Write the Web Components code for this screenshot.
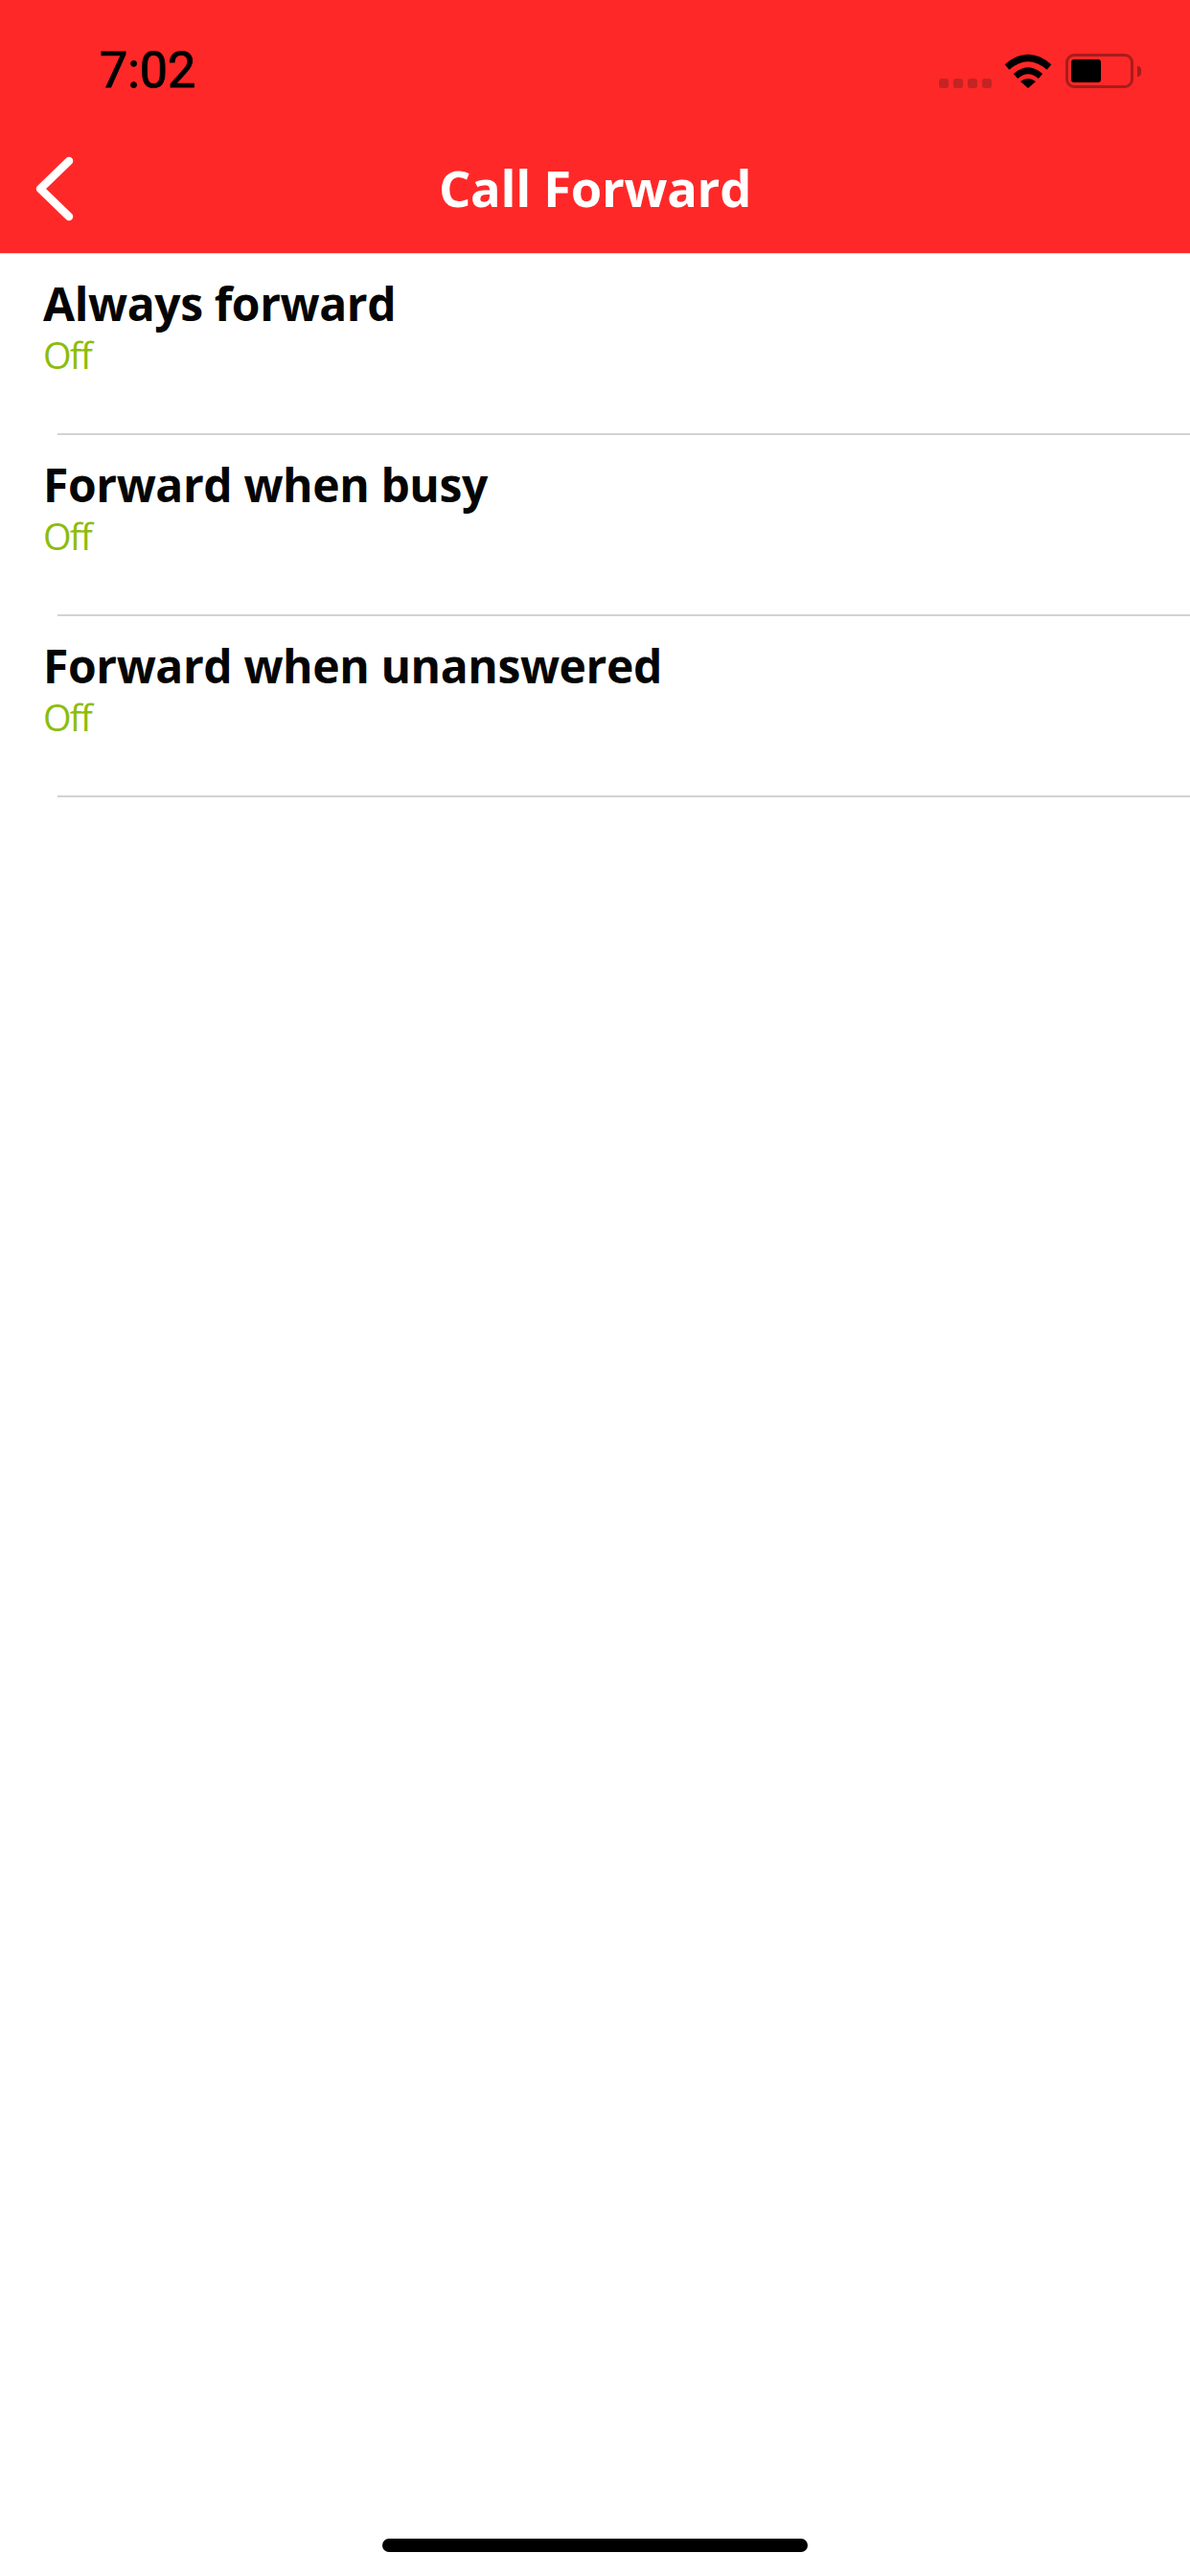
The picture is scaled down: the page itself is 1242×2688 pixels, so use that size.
<!DOCTYPE html>
<html>
<head>
<meta charset="utf-8">
<title>Call Forward</title>
<style>
    html, body { margin: 0; background: #fff; }
</style>
</head>
<body>
<call-forward-screen>
    <forward-row label="Always forward" status="Off"></forward-row>
    <forward-row label="Forward when busy" status="Off"></forward-row>
    <forward-row label="Forward when unanswered" status="Off"></forward-row>
</call-forward-screen>

<script>
class StatusBar extends HTMLElement {
    constructor() {
        super()
        this.attachShadow({ mode: 'open' })
        this.shadowRoot.innerHTML = `
            <style>
                :host {
                    display: flex;
                    align-items: flex-start;
                    justify-content: space-between;
                    height: 132px;
                    padding: 48px 51px 0 104px;
                    box-sizing: border-box;
                }
                .time {
                    font: 400 52px/52px Roboto, sans-serif;
                    -webkit-text-stroke: 1px #000;
                    color: #000;
                }
                .icons {
                    display: flex;
                    align-items: flex-start;
                    margin-top: 8px;
                }
                .dots {
                    display: flex;
                    gap: 5px;
                    margin: 26px 13px 0 0;
                }
                .dots span {
                    width: 10px;
                    height: 10px;
                    border-radius: 3px;
                    background: #c42424;
                }
                .wifi { display: block; margin-right: 14px; }
                .battery {
                    width: 71px;
                    height: 36px;
                    box-sizing: border-box;
                    border: 3px solid #a81c1c;
                    border-radius: 9px;
                    padding: 3px;
                }
                .battery i {
                    display: block;
                    width: 31px;
                    height: 24px;
                    border-radius: 3px;
                    background: #000;
                }
                .nub {
                    width: 4px;
                    height: 11px;
                    margin: 13px 0 0 4px;
                    border-radius: 0 6px 6px 0;
                    background: #a81c1c;
                }
            </style>
            <span class="time">7:02</span>
            <div class="icons">
                <div class="dots"><span></span><span></span><span></span><span></span></div>
                <svg class="wifi" width="50" height="36" viewBox="0 0 50 36">
                    <path d="M3 14 Q25 -5 47 14" fill="none" stroke="#000" stroke-width="7"/>
                    <path d="M12 23.5 Q25 12 38 23.5" fill="none" stroke="#000" stroke-width="6.5"/>
                    <path d="M17 29 Q25 23 33 29 L25 36 Z" fill="#000"/>
                </svg>
                <div class="battery"><i></i></div>
                <div class="nub"></div>
            </div>
        `
    }
}

class NavBar extends HTMLElement {
    constructor() {
        super()
        this.attachShadow({ mode: 'open' })
        this.shadowRoot.innerHTML = `
            <style>
                :host {
                    display: grid;
                    grid-template-columns: 120px 1fr 120px;
                    align-items: center;
                    height: 132px;
                    color: #fff;
                }
                svg { display: block; margin: -2px 0 0 36px; }
                h1 {
                    margin: -5px 0 0;
                    text-align: center;
                    font: 700 52.5px/60px "Open Sans", sans-serif;
                    letter-spacing: -0.3px;
                }
            </style>
            <svg width="44" height="68" viewBox="0 0 44 68">
                <path d="M36 5 L6 34 L36 63" fill="none" stroke="#fff" stroke-width="8.5" stroke-linecap="round" stroke-linejoin="round"/>
            </svg>
            <h1><slot></slot></h1>
        `
    }
}

class ForwardRow extends HTMLElement {
    constructor() {
        super()
        this.attachShadow({ mode: 'open' })
        this.shadowRoot.innerHTML = `
            <style>
                :host { display: block; }
                .text {
                    height: 187px;
                    padding: 24px 0 0 45px;
                    box-sizing: border-box;
                }
                .label {
                    font: 700 48px/56px "Open Sans", sans-serif;
                    letter-spacing: -0.4px;
                    color: #050505;
                }
                .status {
                    margin: 5px 0 0;
                    font: 400 38px/40px "Open Sans", sans-serif;
                    color: #8cbd0a;
                    letter-spacing: -1.7px;
                }
                .rule {
                    height: 2px;
                    margin-left: 60px;
                    background: #d2d2d6;
                }
            </style>
            <div class="text">
                <div class="label"></div>
                <div class="status"></div>
            </div>
            <div class="rule"></div>
        `
        this.shadowRoot.querySelector('.label').textContent = this.getAttribute('label')
        this.shadowRoot.querySelector('.status').textContent = this.getAttribute('status')
    }
}

class HomeIndicator extends HTMLElement {
    constructor() {
        super()
        this.attachShadow({ mode: 'open' })
        this.shadowRoot.innerHTML = `
            <style>
                :host {
                    display: flex;
                    justify-content: center;
                    padding-bottom: 25px;
                }
                div {
                    width: 444px;
                    height: 14px;
                    border-radius: 7px;
                    background: #000;
                }
            </style>
            <div></div>
        `
    }
}

class CallForwardScreen extends HTMLElement {
    constructor() {
        super()
        this.attachShadow({ mode: 'open' })
        this.shadowRoot.innerHTML = `
            <style>
                :host {
                    display: flex;
                    flex-direction: column;
                    width: 1242px;
                    height: 2688px;
                    background: #fff;
                    overflow: hidden;
                }
                header {
                    background: #ff2828;
                    border-bottom: 1px solid #d9d9d9;
                }
                main { flex: 1; }
            </style>
            <header>
                <status-bar></status-bar>
                <nav-bar>Call Forward</nav-bar>
            </header>
            <main><slot></slot></main>
            <home-indicator></home-indicator>
        `
    }
}

customElements.define('status-bar', StatusBar)
customElements.define('nav-bar', NavBar)
customElements.define('forward-row', ForwardRow)
customElements.define('home-indicator', HomeIndicator)
customElements.define('call-forward-screen', CallForwardScreen)
</script>
</body>
</html>
